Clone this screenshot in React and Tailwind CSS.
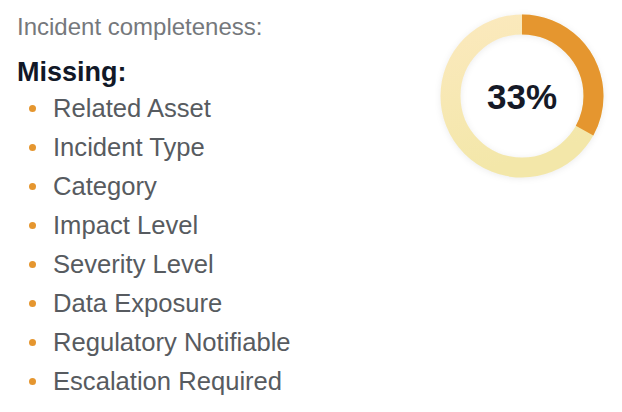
const MISSING = [
  'Related Asset',
  'Incident Type',
  'Category',
  'Impact Level',
  'Severity Level',
  'Data Exposure',
  'Regulatory Notifiable',
  'Escalation Required',
]

function Donut({ percent }) {
  const r = 71.5
  const c = 2 * Math.PI * r
  const filled = (percent / 100) * c
  return (
    <div className="relative w-[164px] h-[164px] shrink-0">
      <svg width="164" height="164" viewBox="0 0 164 164" className="drop-shadow-[0_1px_3px_rgba(0,0,0,0.08)]">
        <defs>
          <linearGradient id="ring" x1="0" y1="0" x2="0.3" y2="1">
            <stop offset="0" stopColor="#fbe9bd" />
            <stop offset="1" stopColor="#f3e7a9" />
          </linearGradient>
        </defs>
        <circle cx="82" cy="82" r={r} fill="none" stroke="url(#ring)" strokeWidth="20" />
        <circle
          cx="82" cy="82" r={r} fill="none" stroke="#e5962f" strokeWidth="20"
          strokeDasharray={`${filled} ${c}`}
          transform="rotate(-90 82 82)"
        />
      </svg>
      <div className="absolute inset-0 flex items-center justify-center">
        <span className="text-[35px] font-bold text-[#161a27] leading-none">{percent}%</span>
      </div>
    </div>
  )
}

export default function App() {
  return (
    <div className="w-[622px] h-[412px] bg-white pl-[17px] pr-[18px] pt-[9px] flex justify-between items-start font-['Liberation_Sans',Arial,sans-serif]">
      <div>
        <div className="text-[24px] leading-[36px] text-[#75787c]">Incident completeness:</div>
        <div className="mt-[11px] text-[27px] leading-[33px] font-bold text-[#111827]">Missing:</div>
        <ul>
          {MISSING.map(item => (
            <li key={item} className="flex items-center text-[25.6px] leading-[39px] text-[#575b60]">
              <span className="w-[7px] h-[7px] rounded-full bg-[#e5962f] ml-[12px] mr-[17px]" />
              {item}
            </li>
          ))}
        </ul>
      </div>
      <div className="mt-[5px]">
        <Donut percent={33} />
      </div>
    </div>
  )
}
